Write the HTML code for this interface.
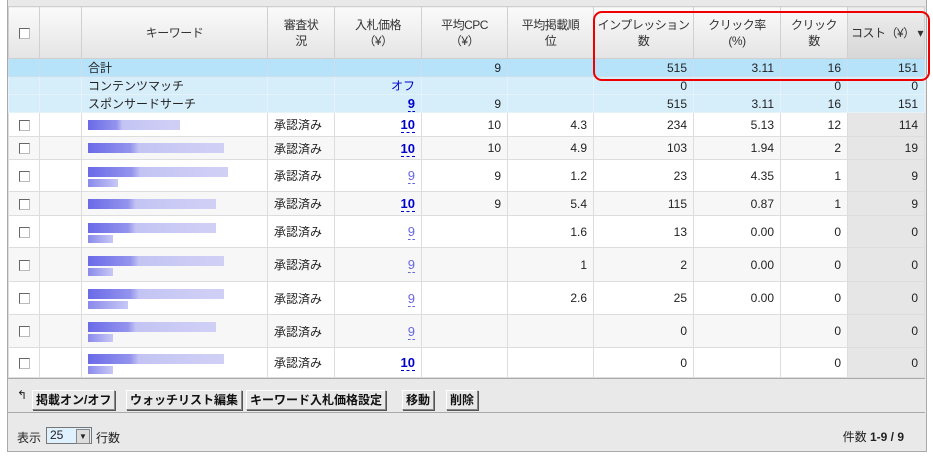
<!DOCTYPE html>
<html><head><meta charset="utf-8"><style>
body{margin:0;width:933px;height:459px;background:#fff;font-family:"Liberation Sans","Noto Sans CJK JP",sans-serif;font-size:12px;color:#222;position:relative;overflow:hidden}
.wrap{position:absolute;left:7px;top:0;width:918px;height:451px;background:#e9e9e9;border-left:1px solid #aaa;border-right:1px solid #aaa;border-bottom:1px solid #aaa}
table{position:absolute;left:8px;top:6px;border-collapse:collapse;table-layout:fixed;width:916px}
td,th{border:1px solid #ddd;padding:0 6px;overflow:hidden;white-space:nowrap}
th{font-weight:normal;height:51px;background:linear-gradient(#fafafa,#e4e4e4);border-color:#d0d0d0;line-height:16px;color:#333;text-align:center;padding:0 1px;letter-spacing:-0.5px}
th.sort{background:linear-gradient(#eee,#d6d6d6);text-align:left;padding-left:3px}
td{text-align:right;vertical-align:middle}
tr.tot td{background:#b6e2fa;height:17px;border-color:#cde}
tr.sub td{background:#d6eefa;height:17px;border-color:#e6f2fa}
tr.r td{background:#fff}
tr.a td{background:#f7f7f7}
tr.r td.c,tr.a td.c{background:#e6e6e6}
td.l{text-align:left}
.cb{display:inline-block;width:9px;height:9px;border:1px solid #666;border-right-color:#bbb;border-bottom-color:#bbb;background:#fff;vertical-align:middle}
.bid{color:#00c;font-weight:bold;border-bottom:1px dashed #00c;font-size:13px}
.bl{color:#66d;border-bottom:1px dashed #66d;font-size:13px}
.kw{height:10px;margin:2px 0;background:linear-gradient(90deg,#6a6ae8 0,#9494ee 25%,#c4c4f4 30%,#d0d0f6 80%,transparent 80%)}
.kw2{height:8px;width:70px;background:linear-gradient(90deg,#8a8aec,#c8c8f6)}
.btn{position:absolute;top:390px;height:18px;line-height:18px;border:1px solid #888;border-top-color:#fff;border-left-color:#fff;box-shadow:1px 1px 0 #555;background:#e8e8e8;font-weight:bold;font-size:12px;padding:0 3px;color:#111}
.tb{position:absolute;left:7px;top:378px;width:918px;border-top:1px solid #aaa;height:33px}
.pg{position:absolute;left:7px;top:412px;width:918px;border-top:1px solid #aaa}
.red{position:absolute;left:593px;top:11px;width:333px;height:66px;border:2px solid #e00;border-radius:9px}
</style></head><body>
<div class="wrap"></div>
<table>
<colgroup><col style="width:31px"><col style="width:42px"><col style="width:186px"><col style="width:67px"><col style="width:87px"><col style="width:86px"><col style="width:86px"><col style="width:100px"><col style="width:87px"><col style="width:67px"><col style="width:77px"></colgroup>
<tr><th><span class="cb"></span></th><th></th><th>キーワード</th><th>審査状<br>況</th><th>入札価格<br>（¥）</th><th>平均CPC<br>（¥）</th><th>平均掲載順<br>位</th><th>インプレッション<br>数</th><th>クリック率<br>(%)</th><th>クリック<br>数</th><th class="sort">コスト（¥） ▾</th></tr>
<tr class="tot"><td></td><td></td><td class="l">合計</td><td></td><td></td><td>9</td><td></td><td>515</td><td>3.11</td><td>16</td><td>151</td></tr>
<tr class="sub"><td></td><td></td><td class="l">コンテンツマッチ</td><td></td><td style="color:#00c">オフ</td><td></td><td></td><td>0</td><td></td><td>0</td><td>0</td></tr>
<tr class="sub"><td></td><td></td><td class="l">スポンサードサーチ</td><td></td><td><span class="bid">9</span></td><td>9</td><td></td><td>515</td><td>3.11</td><td>16</td><td>151</td></tr>
<tr class="r" style="height:24px"><td style="text-align:center"><span class="cb"></span></td><td></td><td class="l"><div class="kw" style="width:115px"></div></td><td class="l">承認済み</td><td><span class="bid">10</span></td><td>10</td><td>4.3</td><td>234</td><td>5.13</td><td>12</td><td class="c">114</td></tr>
<tr class="a" style="height:23px"><td style="text-align:center"><span class="cb"></span></td><td></td><td class="l"><div class="kw" style="width:170px"></div></td><td class="l">承認済み</td><td><span class="bid">10</span></td><td>10</td><td>4.9</td><td>103</td><td>1.94</td><td>2</td><td class="c">19</td></tr>
<tr class="r" style="height:32px"><td style="text-align:center"><span class="cb"></span></td><td></td><td class="l"><div class="kw" style="width:175px"></div><div class="kw2" style="width:30px"></div></td><td class="l">承認済み</td><td><span class="bl">9</span></td><td>9</td><td>1.2</td><td>23</td><td>4.35</td><td>1</td><td class="c">9</td></tr>
<tr class="a" style="height:24px"><td style="text-align:center"><span class="cb"></span></td><td></td><td class="l"><div class="kw" style="width:160px"></div></td><td class="l">承認済み</td><td><span class="bid">10</span></td><td>9</td><td>5.4</td><td>115</td><td>0.87</td><td>1</td><td class="c">9</td></tr>
<tr class="r" style="height:32px"><td style="text-align:center"><span class="cb"></span></td><td></td><td class="l"><div class="kw" style="width:160px"></div><div class="kw2" style="width:25px"></div></td><td class="l">承認済み</td><td><span class="bl">9</span></td><td></td><td>1.6</td><td>13</td><td>0.00</td><td>0</td><td class="c">0</td></tr>
<tr class="a" style="height:34px"><td style="text-align:center"><span class="cb"></span></td><td></td><td class="l"><div class="kw" style="width:170px"></div><div class="kw2" style="width:25px"></div></td><td class="l">承認済み</td><td><span class="bl">9</span></td><td></td><td>1</td><td>2</td><td>0.00</td><td>0</td><td class="c">0</td></tr>
<tr class="r" style="height:33px"><td style="text-align:center"><span class="cb"></span></td><td></td><td class="l"><div class="kw" style="width:170px"></div><div class="kw2" style="width:40px"></div></td><td class="l">承認済み</td><td><span class="bl">9</span></td><td></td><td>2.6</td><td>25</td><td>0.00</td><td>0</td><td class="c">0</td></tr>
<tr class="a" style="height:33px"><td style="text-align:center"><span class="cb"></span></td><td></td><td class="l"><div class="kw" style="width:160px"></div><div class="kw2" style="width:25px"></div></td><td class="l">承認済み</td><td><span class="bl">9</span></td><td></td><td></td><td>0</td><td></td><td>0</td><td class="c">0</td></tr>
<tr class="r" style="height:30px"><td style="text-align:center"><span class="cb"></span></td><td></td><td class="l"><div class="kw" style="width:170px"></div><div class="kw2" style="width:25px"></div></td><td class="l">承認済み</td><td><span class="bid">10</span></td><td></td><td></td><td>0</td><td></td><td>0</td><td class="c">0</td></tr>
</table>
<div class="red"></div>
<div class="tb"></div>
<div style="position:absolute;left:17px;top:388px;font-size:12px">↰</div>
<div class="btn" style="left:32px">掲載オン/オフ</div>
<div class="btn" style="left:126px">ウォッチリスト編集</div>
<div class="btn" style="left:246px">キーワード入札価格設定</div>
<div class="btn" style="left:402px">移動</div>
<div class="btn" style="left:446px">削除</div>
<div class="pg"></div>
<div style="position:absolute;left:17px;top:429px">表示</div>
<div style="position:absolute;left:46px;top:427px;background:#dff0ff;border:1px solid #777;font-size:12px;line-height:15px;padding-left:3px;box-sizing:border-box;width:46px;height:17px">25<span style="position:absolute;right:1px;top:1px;width:12px;height:13px;background:#ddd;border:1px solid #888;font-size:8px;text-align:center;line-height:13px">▼</span></div>
<div style="position:absolute;left:96px;top:429px">行数</div>
<div style="position:absolute;right:29px;top:428px">件数 <b>1-9 / 9</b></div>
</body></html>
